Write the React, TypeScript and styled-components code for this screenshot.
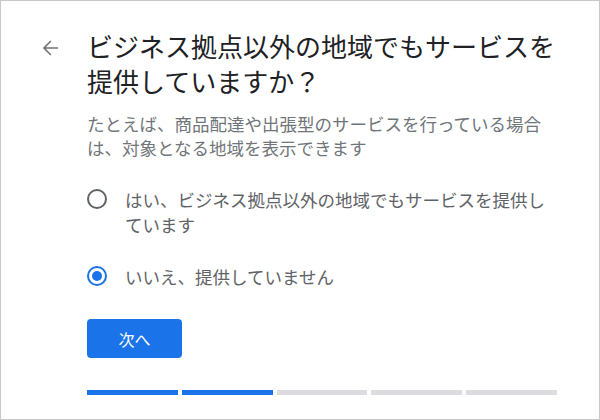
import styled, { createGlobalStyle } from 'styled-components';

const GlobalStyle = createGlobalStyle`
  html, body {
    margin: 0;
    padding: 0;
    background: #ffffff;
  }
  body {
    font-family: "Noto Sans CJK JP", "Noto Sans", sans-serif;
  }
  * {
    box-sizing: border-box;
  }
`;

const Frame = styled.div`
  width: 600px;
  height: 420px;
  border: 1px solid #c8c8c8;
  background: #ffffff;
  display: grid;
  grid-template-columns: 86px 470px;
  align-content: start;
  padding-top: 27px;
`;

const BackButton = styled.button`
  border: none;
  background: none;
  padding: 0;
  margin: 8px 0 0 37px;
  width: 24px;
  height: 24px;
  color: #6f7377;
  cursor: pointer;
  display: flex;
  align-self: start;
`;

const Content = styled.div`
  display: flex;
  flex-direction: column;
`;

const Title = styled.h1`
  margin: 0;
  font-size: 26px;
  line-height: 35px;
  font-weight: 400;
  color: #202124;
`;

const Subtitle = styled.p`
  margin: 14px 0 0;
  font-size: 17.5px;
  line-height: 24px;
  color: #70757a;
`;

const Options = styled.div`
  display: flex;
  flex-direction: column;
  gap: 27px;
  margin-top: 27px;
`;

const Option = styled.label`
  display: flex;
  align-items: flex-start;
  gap: 18px;
  cursor: pointer;
`;

const RadioCircle = styled.span<{ $checked: boolean }>`
  flex: none;
  width: 20px;
  height: 20px;
  margin-top: 2px;
  border-radius: 50%;
  border: 2px solid ${({ $checked }) => ($checked ? '#1a73e8' : '#5f6368')};
  display: flex;
  align-items: center;
  justify-content: center;

  &::after {
    content: '';
    width: 10px;
    height: 10px;
    border-radius: 50%;
    background: #1a73e8;
    display: ${({ $checked }) => ($checked ? 'block' : 'none')};
  }
`;

const OptionText = styled.span`
  font-size: 17.5px;
  line-height: 25px;
  color: #5f6368;
`;

const NextButton = styled.button`
  align-self: flex-start;
  margin-top: 30px;
  width: 95px;
  height: 39px;
  border: none;
  border-radius: 4px;
  background: #1a73e8;
  color: #ffffff;
  font-family: inherit;
  font-size: 16px;
  cursor: pointer;
`;

const Progress = styled.div`
  display: grid;
  grid-template-columns: repeat(5, 1fr);
  gap: 4px;
  margin-top: 32px;
`;

const Step = styled.div<{ $done: boolean }>`
  height: 5px;
  background: ${({ $done }) => ($done ? '#1a73e8' : '#dadce0')};
`;

const options = [
  { label: 'はい、ビジネス拠点以外の地域でもサービスを提供しています', checked: false },
  { label: 'いいえ、提供していません', checked: true },
];

export default function App() {
  return (
    <>
      <GlobalStyle />
      <Frame>
        <BackButton aria-label="戻る">
          <svg width="24" height="24" viewBox="0 0 24 24" fill="currentColor">
            <path d="M20 11.2H7.83l5.59-5.59L12.3 4.5 4.8 12l7.5 7.5 1.12-1.11-5.59-5.59H20v-1.6z" />
          </svg>
        </BackButton>
        <Content>
          <Title>ビジネス拠点以外の地域でもサービスを提供していますか？</Title>
          <Subtitle>
            たとえば、商品配達や出張型のサービスを行っている場合は、対象となる地域を表示できます
          </Subtitle>
          <Options>
            {options.map((o) => (
              <Option key={o.label}>
                <RadioCircle $checked={o.checked} />
                <OptionText>{o.label}</OptionText>
              </Option>
            ))}
          </Options>
          <NextButton>次へ</NextButton>
          <Progress>
            {[true, true, false, false, false].map((done, i) => (
              <Step key={i} $done={done} />
            ))}
          </Progress>
        </Content>
      </Frame>
    </>
  );
}
